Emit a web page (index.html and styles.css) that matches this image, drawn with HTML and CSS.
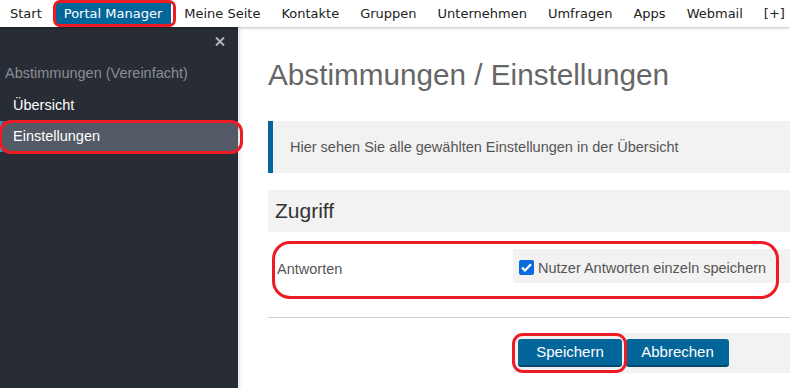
FILE: index.html
```html
<!DOCTYPE html>
<html lang="de">
<head>
<meta charset="utf-8">
<title>Abstimmungen / Einstellungen</title>
<link rel="stylesheet" href="styles.css">
</head>
<body>
<nav class="topnav">
  <a class="nav-item">Start</a>
  <a class="nav-item active">Portal Manager</a>
  <a class="nav-item">Meine Seite</a>
  <a class="nav-item">Kontakte</a>
  <a class="nav-item">Gruppen</a>
  <a class="nav-item">Unternehmen</a>
  <a class="nav-item">Umfragen</a>
  <a class="nav-item">Apps</a>
  <a class="nav-item">Webmail</a>
  <a class="nav-item">[+]</a>
</nav>
<div class="layout">
  <aside class="sidebar">
    <div class="sidebar-head">
      <svg class="close-icon" width="10" height="9" viewBox="0 0 10 9"><path d="M1 0.5 L9 8.5 M9 0.5 L1 8.5" stroke="#aeb3ba" stroke-width="2" fill="none"/></svg>
    </div>
    <div class="sidebar-title">Abstimmungen (Vereinfacht)</div>
    <a class="side-item">Übersicht</a>
    <a class="side-item active">Einstellungen</a>
  </aside>
  <main class="content">
    <h1 class="page-title">Abstimmungen / Einstellungen</h1>
    <div class="info">Hier sehen Sie alle gewählten Einstellungen in der Übersicht</div>
    <div class="panel-head">Zugriff</div>
    <div class="form-row">
      <div class="form-label">Antworten</div>
      <div class="form-field">
        <label class="check">
          <span class="check-box"><svg width="11" height="9" viewBox="0 0 11 9"><path d="M1 4.6 L4 7.5 L10 1.2" stroke="#fff" stroke-width="2.2" fill="none"/></svg></span>
          Nutzer Antworten einzeln speichern
        </label>
      </div>
    </div>
    <hr class="divider">
    <div class="form-row actions-row">
      <div class="form-label"></div>
      <div class="actions">
        <button class="btn">Speichern</button>
        <button class="btn">Abbrechen</button>
      </div>
    </div>
  </main>
</div>
<div class="mark mark-nav"></div>
<div class="mark mark-side"></div>
<div class="mark mark-row"></div>
<div class="mark mark-save"></div>
</body>
</html>
```
FILE: styles.css
```css
* { box-sizing: border-box; }
html, body { margin: 0; padding: 0; }
body {
  width: 790px;
  height: 388px;
  overflow: hidden;
  background: #fff;
  font-family: "Liberation Sans", Arial, sans-serif;
  font-size: 14.5px;
  position: relative;
}
.topnav {
  height: 27px;
  display: flex;
  gap: 5px;
  padding-left: 2px;
  background: #fff;
  box-shadow: 0 1px 3px rgba(0,0,0,0.25);
  position: relative;
  z-index: 2;
  font-family: "DejaVu Sans", Verdana, sans-serif;
  font-size: 13px;
}
.nav-item {
  margin-top: 2px;
  height: 23px;
  line-height: 23px;
  padding: 0 8px;
  color: #222;
  white-space: nowrap;
}
.nav-item.active {
  padding: 0 9px;
  background: #03669b;
  color: #fff;
}
.layout {
  display: flex;
  height: 361px;
}
.sidebar {
  width: 238px;
  flex: none;
  background: #272c35;
  padding-top: 10px;
  box-shadow: 1px 0 4px rgba(0,0,0,0.15);
  position: relative;
  z-index: 1;
}
.sidebar-head {
  display: flex;
  justify-content: flex-end;
  padding-right: 13px;
  height: 9px;
}
.close-icon { display: block; }
.sidebar-title {
  margin-top: 17px;
  margin-bottom: 7px;
  padding-left: 5px;
  line-height: 20px;
  color: #8a8e95;
}
.side-item {
  display: block;
  height: 31px;
  line-height: 31px;
  padding-left: 11px;
  border-left: 2px solid transparent;
  color: #fff;
}
.side-item.active {
  background: #545a65;
  border-left-color: #3f8fc0;
}
.content {
  flex: 1;
  padding: 32px 0 0 30px;
}
.page-title {
  margin: 0;
  font-weight: normal;
  font-size: 29.7px;
  line-height: 32px;
  color: #666;
}
.info {
  margin-top: 30px;
  height: 52px;
  line-height: 52px;
  padding-left: 17px;
  border-left: 5px solid #03669b;
  background: #f2f2f2;
  color: #555;
}
.panel-head {
  margin-top: 17px;
  height: 42px;
  line-height: 42px;
  padding-left: 7px;
  background: #f2f2f2;
  font-size: 21px;
  color: #333;
}
.form-row {
  display: flex;
  align-items: flex-start;
  margin-top: 17px;
}
.form-label {
  width: 245px;
  height: 34px;
  flex: none;
  display: flex;
  align-items: center;
  padding: 6px 0 0 9px;
  color: #555;
}
.form-field {
  flex: 1;
  height: 34px;
  background: #f2f2f2;
  padding: 3px 0 0 6px;
  display: flex;
  align-items: center;
}
.check {
  display: flex;
  align-items: center;
  gap: 4px;
  color: #555;
  white-space: nowrap;
}
.check-box {
  width: 15px;
  height: 15px;
  border-radius: 2px;
  background: #0b6bdc;
  display: flex;
  align-items: center;
  justify-content: center;
}
.check-box svg { display: block; }
.divider {
  margin: 34px 0 0 0;
  border: 0;
  border-top: 1px solid #cfcfcf;
  height: 0;
}
.actions-row { margin-top: 15px; }
.actions-row .form-label { height: 40px; }
.actions {
  flex: 1;
  display: flex;
  gap: 4px;
  background: #f2f2f2;
  padding: 6px 5px;
  height: 40px;
}
.btn {
  height: 28px;
  min-width: 104px;
  padding: 0 15px 1px;
  border: 0;
  border-bottom: 2px solid #02476e;
  border-radius: 3px;
  background: #03669b;
  color: #fff;
  font-family: "Liberation Sans", Arial, sans-serif;
  font-size: 15px;
}
.btn + .btn { min-width: 103px; }
.mark {
  position: absolute;
  border: 3px solid #ed1c24;
  z-index: 5;
  pointer-events: none;
}
.mark-nav { left: 53px; top: 0; width: 123px; height: 27px; border-radius: 7px; }
.mark-side { left: -1px; top: 120px; width: 244px; height: 34px; border-radius: 12px; }
.mark-row { left: 272px; top: 241px; width: 507px; height: 58px; border-radius: 18px; }
.mark-save { left: 512px; top: 333px; width: 115px; height: 40px; border-radius: 11px; }
```
